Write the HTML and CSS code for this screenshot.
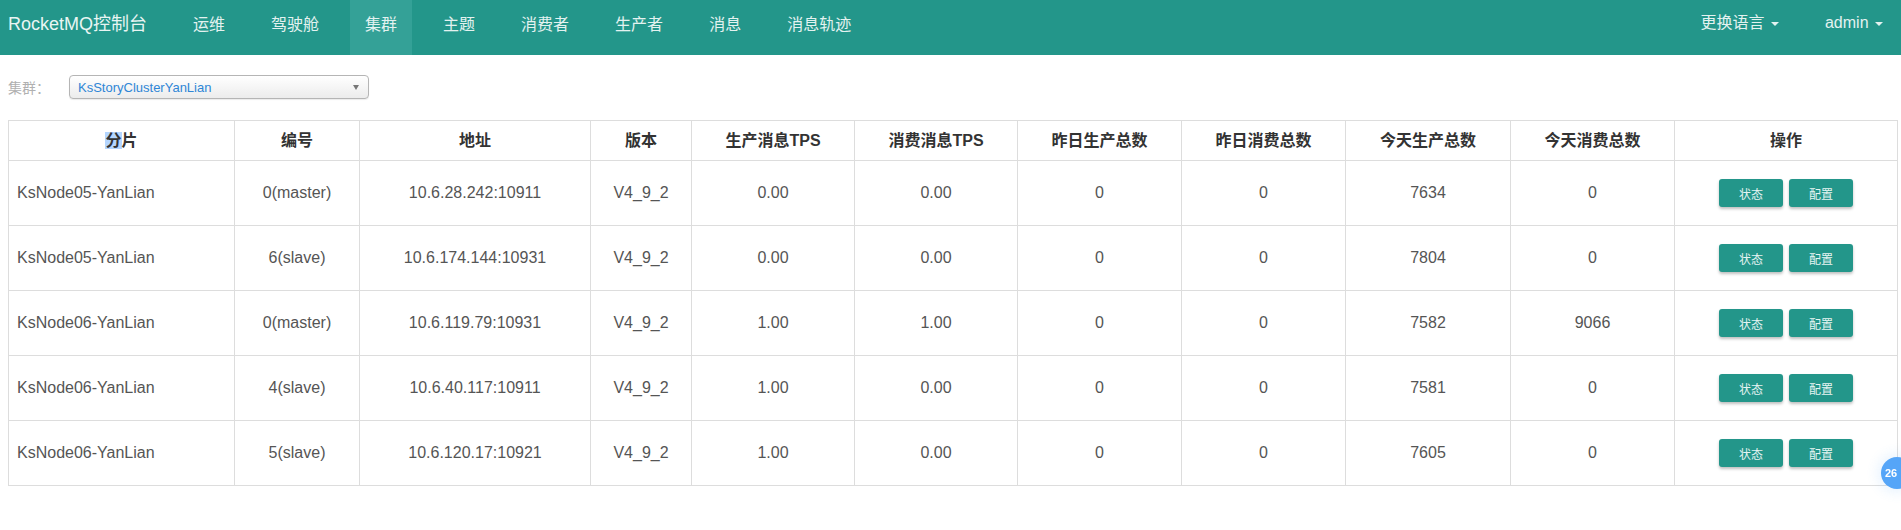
FILE: index.html
```
<!DOCTYPE html>
<html>
<head>
	<title>RocketMQ控制台</title>
	<meta charset="utf-8">
	<link rel="stylesheet" href="styles.css">
</head>
<body>

<div class="navbar">
	<a class="brand" href="#">RocketMQ控制台</a>
	<ul class="nav">
		<li><a href="#">运维</a></li>
		<li><a href="#">驾驶舱</a></li>
		<li class="active"><a href="#">集群</a></li>
		<li><a href="#">主题</a></li>
		<li><a href="#">消费者</a></li>
		<li><a href="#">生产者</a></li>
		<li><a href="#">消息</a></li>
		<li><a href="#">消息轨迹</a></li>
	</ul>
	<ul class="nav nav-right">
		<li><a href="#">更换语言 <span class="caret"></span></a></li>
		<li><a href="#">admin <span class="caret"></span></a></li>
	</ul>
</div>

<div class="main">

	<div class="cluster-picker">
		<label class="picker-label">集群：</label>
		<span class="select-box">
			<select>
				<option>KsStoryClusterYanLian</option>
			</select>
		</span>
	</div>

	<table class="broker-table">
		<colgroup>
			<col style="width: 226px">
			<col style="width: 125px">
			<col style="width: 231px">
			<col style="width: 101px">
			<col style="width: 163px">
			<col style="width: 163px">
			<col style="width: 164px">
			<col style="width: 164px">
			<col style="width: 165px">
			<col style="width: 164px">
			<col style="width: 223px">
		</colgroup>
		<thead>
			<tr>
				<th><span class="selected">分</span>片</th>
				<th>编号</th>
				<th>地址</th>
				<th>版本</th>
				<th>生产消息TPS</th>
				<th>消费消息TPS</th>
				<th>昨日生产总数</th>
				<th>昨日消费总数</th>
				<th>今天生产总数</th>
				<th>今天消费总数</th>
				<th>操作</th>
			</tr>
		</thead>
		<tbody>
			<tr>
				<td class="name">KsNode05-YanLian</td>
				<td>0(master)</td>
				<td>10.6.28.242:10911</td>
				<td>V4_9_2</td>
				<td>0.00</td>
				<td>0.00</td>
				<td>0</td>
				<td>0</td>
				<td>7634</td>
				<td>0</td>
				<td><button class="btn">状态</button><button class="btn">配置</button></td>
			</tr>
			<tr>
				<td class="name">KsNode05-YanLian</td>
				<td>6(slave)</td>
				<td>10.6.174.144:10931</td>
				<td>V4_9_2</td>
				<td>0.00</td>
				<td>0.00</td>
				<td>0</td>
				<td>0</td>
				<td>7804</td>
				<td>0</td>
				<td><button class="btn">状态</button><button class="btn">配置</button></td>
			</tr>
			<tr>
				<td class="name">KsNode06-YanLian</td>
				<td>0(master)</td>
				<td>10.6.119.79:10931</td>
				<td>V4_9_2</td>
				<td>1.00</td>
				<td>1.00</td>
				<td>0</td>
				<td>0</td>
				<td>7582</td>
				<td>9066</td>
				<td><button class="btn">状态</button><button class="btn">配置</button></td>
			</tr>
			<tr>
				<td class="name">KsNode06-YanLian</td>
				<td>4(slave)</td>
				<td>10.6.40.117:10911</td>
				<td>V4_9_2</td>
				<td>1.00</td>
				<td>0.00</td>
				<td>0</td>
				<td>0</td>
				<td>7581</td>
				<td>0</td>
				<td><button class="btn">状态</button><button class="btn">配置</button></td>
			</tr>
			<tr>
				<td class="name">KsNode06-YanLian</td>
				<td>5(slave)</td>
				<td>10.6.120.17:10921</td>
				<td>V4_9_2</td>
				<td>1.00</td>
				<td>0.00</td>
				<td>0</td>
				<td>0</td>
				<td>7605</td>
				<td>0</td>
				<td><button class="btn">状态</button><button class="btn">配置</button></td>
			</tr>
		</tbody>
	</table>

</div>

<div class="float-badge">26</div>

</body>
</html>
```

FILE: styles.css
```
/* Reset */

* { margin: 0; padding: 0; box-sizing: border-box; }

body {
	font-family: "Liberation Sans", "Noto Sans CJK SC", sans-serif;
	font-size: 16px;
	color: #444;
	background-color: white;
}

a {
	text-decoration: none;
	color: inherit;
}


/* Navbar */

.navbar {
	display: flex;
	align-items: flex-start;
	height: 55px;
	background-color: #23968a;
}

.brand {
	font-size: 18px;
	line-height: 20px;
	padding: 14px 8px 0 8px;
	color: #e9f5f3;
}

.nav {
	display: flex;
	gap: 16px;
	list-style: none;
	margin-left: 23px;
}

.nav li a {
	display: block;
	height: 55px;
	padding: 15px 15px 0 15px;
	line-height: 20px;
	font-size: 16px;
	color: #e3f2f0;
}

.nav li.active a {
	background-color: #34a197;
}

.nav-right {
	margin-left: auto;
	margin-right: 3px;
}

.nav-right li a {
	padding-top: 13px;
}

.caret {
	display: inline-block;
	width: 0;
	height: 0;
	margin-left: 2px;
	vertical-align: middle;
	border-top: 4px solid #e3f2f0;
	border-left: 4px solid transparent;
	border-right: 4px solid transparent;
}


/* Main */

.main {
	padding: 20px 4px 0 8px;
}

.cluster-picker {
	display: flex;
	align-items: center;
	height: 24px;
	margin-bottom: 21px;
}

.picker-label {
	font-size: 14px;
	color: #b0b0b0;
	width: 61px;
}

.select-box {
	position: relative;
	display: block;
	width: 300px;
	height: 24px;
}

.select-box select {
	appearance: none;
	-webkit-appearance: none;
	width: 100%;
	height: 24px;
	padding: 0 8px;
	font-family: "Liberation Sans", sans-serif;
	font-size: 13px;
	color: #2f86d6;
	border: 1px solid #b5b5b5;
	border-radius: 4px;
	background: linear-gradient(#ffffff, #ececec);
	box-shadow: 0 1px 1px rgba(0, 0, 0, 0.08);
}

.select-box:after {
	content: "";
	position: absolute;
	right: 10px;
	top: 10px;
	border-top: 5px solid #777;
	border-left: 3.5px solid transparent;
	border-right: 3.5px solid transparent;
	pointer-events: none;
}


/* Broker Table */

.broker-table {
	table-layout: fixed;
	border-collapse: collapse;
	width: 1889px;
}

.broker-table th, .broker-table td {
	border: 1px solid #dddddd;
	text-align: center;
	vertical-align: middle;
	padding: 0 8px;
}

.broker-table th {
	height: 40px;
	line-height: 22px;
	font-weight: bold;
	color: #333;
}

.broker-table td {
	height: 65px;
	color: #555;
}

.broker-table td.name {
	text-align: left;
}

.selected {
	background-color: #b4d5fe;
}

.btn {
	width: 64px;
	height: 28px;
	margin: 0 3px;
	border: 0;
	border-radius: 3px;
	font-family: "Liberation Sans", "Noto Sans CJK SC", sans-serif;
	font-size: 12px;
	color: #e6f4f2;
	background-color: #23968a;
	box-shadow: 0 2px 3px rgba(0, 0, 0, 0.25);
}


/* Floating badge */

.float-badge {
	position: fixed;
	left: 1881px;
	top: 457px;
	width: 32px;
	height: 32px;
	border-radius: 50%;
	padding-left: 4px;
	line-height: 32px;
	font-size: 11px;
	font-weight: bold;
	color: white;
	background-color: #55a5f8;
	box-shadow: 0 0 12px 4px rgba(85, 165, 248, 0.12);
	white-space: nowrap;
}
```
